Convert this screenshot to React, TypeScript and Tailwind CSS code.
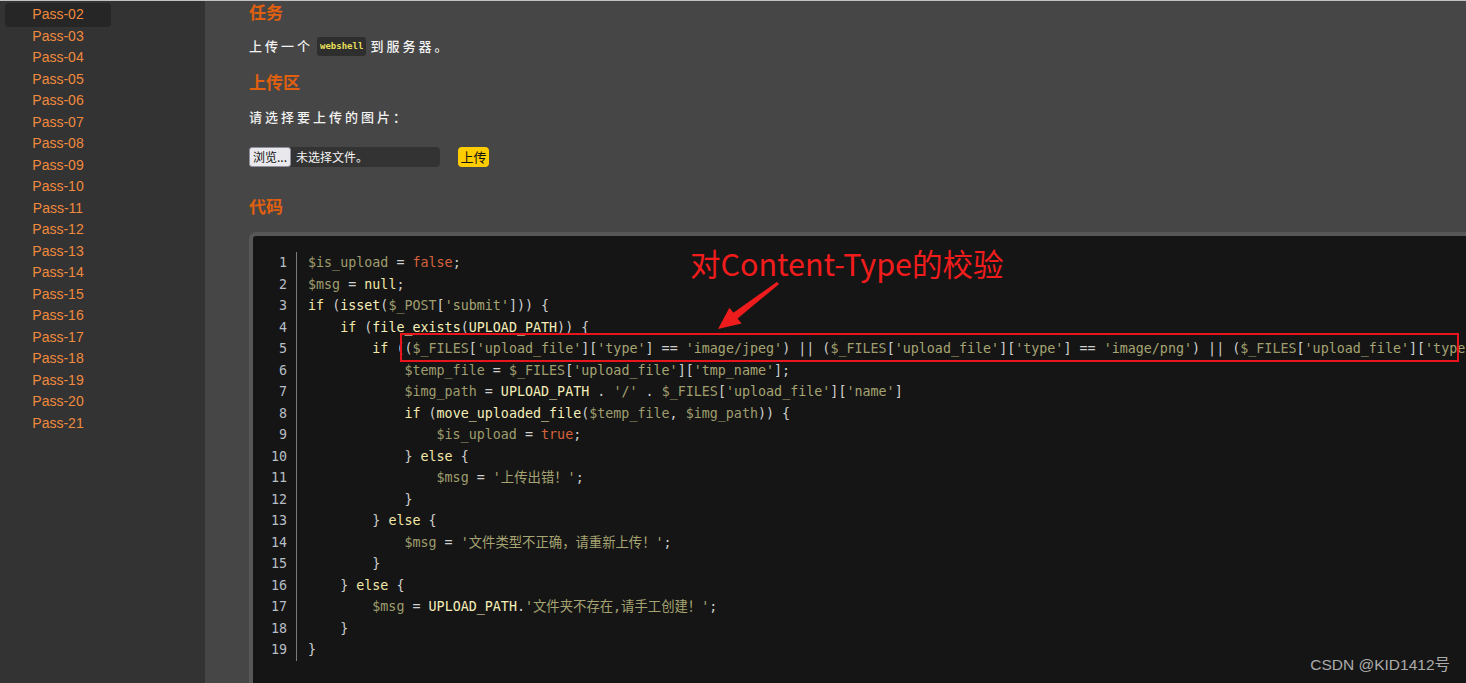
import React from "react";

const passes = Array.from({ length: 20 }, (_, i) => `Pass-${String(i + 2).padStart(2, "0")}`);

const codeLines = [
  "$is_upload = false;",
  "$msg = null;",
  "if (isset($_POST['submit'])) {",
  "    if (file_exists(UPLOAD_PATH)) {",
  "        if (($_FILES['upload_file']['type'] == 'image/jpeg') || ($_FILES['upload_file']['type'] == 'image/png') || ($_FILES['upload_file']['type'] == 'image/gif')) {",
  "            $temp_file = $_FILES['upload_file']['tmp_name'];",
  "            $img_path = UPLOAD_PATH . '/' . $_FILES['upload_file']['name']",
  "            if (move_uploaded_file($temp_file, $img_path)) {",
  "                $is_upload = true;",
  "            } else {",
  "                $msg = '上传出错！';",
  "            }",
  "        } else {",
  "            $msg = '文件类型不正确，请重新上传！';",
  "        }",
  "    } else {",
  "        $msg = UPLOAD_PATH.'文件夹不存在,请手工创建！';",
  "    }",
  "}",
];

type Tok = { t: string; c: string };

function tokenize(line: string): Tok[] {
  const re = /('[^']*')|(\$\w+)|\b(if|else)\b|\b(false|true)\b|\b(null)\b|([A-Za-z_]\w*)|(\s+)|([^\sA-Za-z_$']+)/g;
  const out: Tok[] = [];
  let m: RegExpExecArray | null;
  while ((m = re.exec(line)) !== null) {
    if (m[1]) out.push({ t: m[1], c: "text-[#a6a472]" });
    else if (m[2]) out.push({ t: m[2], c: "text-[#9f9d6d]" });
    else if (m[3]) out.push({ t: m[3], c: "text-[#f3e8a8]" });
    else if (m[4]) out.push({ t: m[4], c: "text-[#d6633c]" });
    else if (m[5]) out.push({ t: m[5], c: "text-[#f3e8a8]" });
    else if (m[6]) out.push({ t: m[6], c: "text-[#f5eeb8]" });
    else if (m[7]) out.push({ t: m[7], c: "" });
    else out.push({ t: m[0], c: "text-[#cfcfcf]" });
  }
  return out;
}

export default function App() {
  return (
    <div className="relative h-[683px] w-[1466px] overflow-hidden bg-[#464646] font-['Liberation_Sans','Noto_Sans_CJK_SC',sans-serif]">
      <div className="h-px w-full bg-[#c2c2c2]" />
      <div className="flex h-[682px]">
        {/* Sidebar */}
        <aside className="w-[205px] shrink-0 bg-[#333333] pt-[3px]">
          {passes.map((p, i) => (
            <div
              key={p}
              className={
                "ml-[5px] w-[106px] text-center text-[14px] leading-[21.5px] text-[#ef8a3e] " +
                (i === 0 ? "rounded-[4px] bg-[#262626] -my-[1.25px] py-[1.25px]" : "")
              }
            >
              {p}
            </div>
          ))}
        </aside>

        {/* Main */}
        <main className="flex-1 pl-[44px] pr-px font-['Noto_Sans_CJK_SC','Liberation_Sans',sans-serif]">
          <h2 className="text-[17px] font-bold leading-[22px] text-[#e0600f]">任务</h2>
          <p className="mt-[12px] flex items-center text-[13px] font-medium leading-[22px] tracking-[3px] text-[#f2f2f2]">
            <span>上传一个</span>
            <code className="mx-[4px] rounded-[3px] bg-[#2e2e2e] px-[3px] py-[3px] font-['DejaVu_Sans_Mono',monospace] text-[9px] font-bold leading-[13px] tracking-normal text-[#e8df5a]">
              webshell
            </code>
            <span>到服务器。</span>
          </p>
          <h2 className="mt-[14px] text-[17px] font-bold leading-[22px] text-[#e0600f]">上传区</h2>
          <p className="mt-[13px] text-[13px] font-medium leading-[22px] tracking-[3px] text-[#f2f2f2]">
            请选择要上传的图片：
          </p>
          <div className="mt-[18px] flex h-[21px] items-center">
            <div className="flex h-[20px] w-[191px] items-center rounded-[4px] bg-[#333333]">
              <span className="flex h-[20px] items-center rounded-[3px] border border-[#8f8f9d] bg-[#e9e9ed] px-[3px] text-[12px] text-[#111]">
                浏览...
              </span>
              <span className="ml-[5px] text-[12px] text-[#f5f5f5]">未选择文件。</span>
            </div>
            <button className="ml-[18px] flex h-[20px] w-[31px] items-center justify-center rounded-[4px] bg-[#ffcc00] text-[13px] text-[#111]">
              上传
            </button>
          </div>
          <h2 className="mt-[28px] text-[17px] font-bold leading-[22px] text-[#e0600f]">代码</h2>

          <div className="mt-[15px] overflow-hidden rounded-[7px] border-4 border-[#575757] bg-[#151515] pb-[40px] pt-[16px]">
            <div className="flex font-['DejaVu_Sans_Mono','Noto_Sans_CJK_SC',monospace] text-[13.35px] leading-[21.5px]">
              <div className="w-[44px] shrink-0 border-r border-[#7a7a7a] pr-[9px] text-right text-[#b6bec6]">
                {codeLines.map((_, i) => (
                  <div key={i}>{i + 1}</div>
                ))}
              </div>
              <div className="min-w-0 flex-1 overflow-hidden whitespace-pre pl-[11px]">
                {codeLines.map((l, i) => (
                  <div key={i}>
                    {tokenize(l).map((tk, j) => (
                      <span key={j} className={tk.c}>
                        {tk.t}
                      </span>
                    ))}
                  </div>
                ))}
              </div>
            </div>
          </div>
        </main>
      </div>

      {/* Annotation overlay */}
      <div className="pointer-events-none absolute left-[690px] top-[243px] whitespace-nowrap font-['Noto_Sans_CJK_SC',sans-serif] text-[30.5px] leading-[40px] text-[#f21c1c]">
        对Content-Type的校验
      </div>
      <div className="pointer-events-none absolute left-[400px] top-[333px] h-[29px] w-[1059px] border-2 border-[#e8161c]" />
      <svg className="pointer-events-none absolute left-0 top-0" width="1466" height="683">
        <polygon
          points="778.9,284.2 737.6,318.4 741.6,323.5 718,329 729.4,307.7 733.4,312.8 777.1,281.8"
          fill="#ee1c1c"
        />
      </svg>
      <div className="pointer-events-none absolute right-[16px] top-[654px] font-['Liberation_Sans','Noto_Sans_CJK_SC',sans-serif] text-[15.5px] leading-[22px] text-[#ababab]">
        CSDN @KID1412号
      </div>
    </div>
  );
}
